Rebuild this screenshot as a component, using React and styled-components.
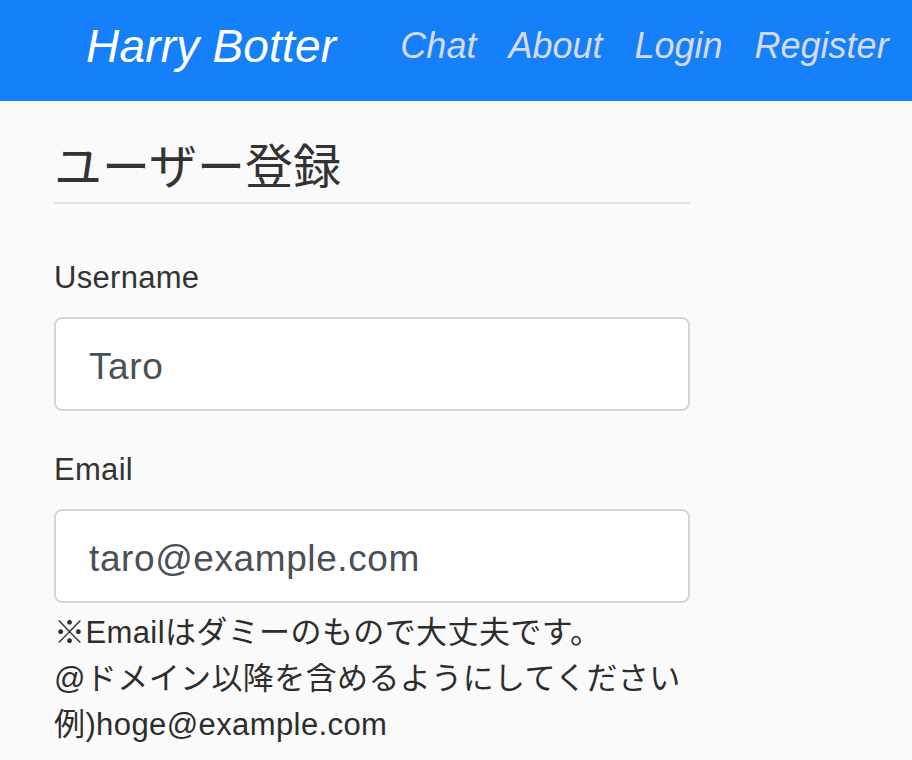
import React from "react";
import styled, { createGlobalStyle } from "styled-components";

const Global = createGlobalStyle`
  html, body { margin: 0; padding: 0; }
  body {
    background: #fafafa;
    font-family: "Liberation Sans", "Noto Sans CJK JP", sans-serif;
    color: #333;
  }
`;

const Navbar = styled.nav`
  height: 101px;
  background: #1680fb;
  display: flex;
  align-items: center;
  padding: 0 0 0 86px;
  box-sizing: border-box;
  gap: 48px;
`;

const Brand = styled.a`
  font-style: italic;
  font-size: 46px;
  color: #fff;
  text-decoration: none;
  letter-spacing: 0.2px;
  line-height: 1;
  padding-bottom: 10px;
`;

const NavList = styled.ul`
  list-style: none;
  display: flex;
  margin: 0;
  padding: 0;
`;

const NavLink = styled.a`
  display: block;
  font-style: italic;
  font-size: 36px;
  color: #d6dbe3;
  text-decoration: none;
  padding: 0 16px 10px;
  line-height: 1;
`;

const Container = styled.main`
  width: 636px;
  margin-left: 54px;
  padding-top: 35px;
`;

const Heading = styled.h2`
  margin: 0 0 51px;
  font-size: 48px;
  font-weight: 400;
  line-height: 1.15;
  padding-bottom: 11px;
  border-bottom: 2px solid #dee2e6;
  font-family: "Noto Sans CJK JP", sans-serif;
  color: #333;
`;

const FormGroup = styled.div`
  margin-bottom: 36px;
`;

const Label = styled.label`
  display: block;
  font-size: 31px;
  letter-spacing: 0.3px;
  line-height: 45px;
  margin-bottom: 17px;
  color: #333;
`;

const Input = styled.input`
  display: block;
  width: 100%;
  box-sizing: border-box;
  height: 94px;
  padding: 6px 33px 0;
  font-size: 37px;
  letter-spacing: 0.6px;
  font-family: "Liberation Sans", sans-serif;
  color: #495057;
  background: #fff;
  border: 2px solid #d3d7dc;
  border-radius: 8px;
  outline: none;
`;

const Help = styled.div`
  margin-top: 7px;
`;

const HelpLine = styled.div`
  font-size: 31px;
  line-height: 46px;
  letter-spacing: 0.4px;
  white-space: nowrap;
  color: #2d2d2d;
`;

export default function App() {
  return (
    <>
      <Global />
      <Navbar>
        <Brand href="#">Harry Botter</Brand>
        <NavList>
          <li><NavLink href="#">Chat</NavLink></li>
          <li><NavLink href="#">About</NavLink></li>
          <li><NavLink href="#">Login</NavLink></li>
          <li><NavLink href="#">Register</NavLink></li>
        </NavList>
      </Navbar>
      <Container>
        <Heading>ユーザー登録</Heading>
        <FormGroup>
          <Label htmlFor="username">Username</Label>
          <Input id="username" defaultValue="Taro" />
        </FormGroup>
        <div>
          <Label htmlFor="email">Email</Label>
          <Input id="email" defaultValue="taro@example.com" />
          <Help>
            <HelpLine>※Emailはダミーのもので大丈夫です。</HelpLine>
            <HelpLine>@ドメイン以降を含めるようにしてください</HelpLine>
            <HelpLine>例)hoge@example.com</HelpLine>
          </Help>
        </div>
      </Container>
    </>
  );
}
